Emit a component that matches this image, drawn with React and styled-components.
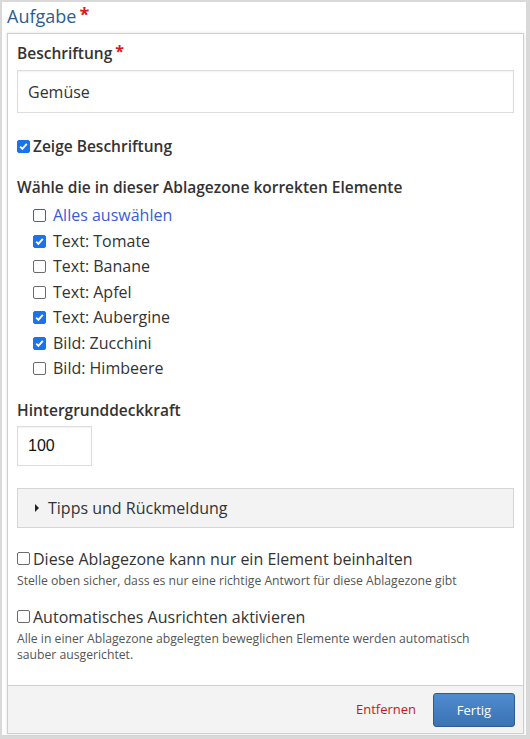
import React from "react";
import styled, { createGlobalStyle } from "styled-components";

const GlobalStyle = createGlobalStyle`
  html, body {
    margin: 0;
    padding: 0;
    background: #fff;
  }
  body {
    font-family: "Open Sans", "Noto Sans", sans-serif;
    color: #333;
  }
`;

const Frame = styled.div`
  width: 530px;
  height: 739px;
  box-sizing: border-box;
  border: 2px solid #d9d9d9;
  border-right-width: 4px;
  border-bottom-width: 4px;
  background: #fff;
  padding: 0 2px 0 5px;
`;

const Legend = styled.div`
  font-size: 18px;
  line-height: 24px;
  color: #2d5d91;
  padding-top: 2px;
  height: 29px;
`;

const Star = styled.span`
  color: #d71920;
  font-weight: 700;
  margin-left: 3px;
  font-size: ${(p) => (p.$small ? "16px" : "18px")};
  line-height: 1;
  vertical-align: top;
  position: relative;
  top: ${(p) => (p.$small ? "2px" : "1px")};
`;

const Card = styled.div`
  border: 1px solid #cfcfcf;
  box-shadow: 0 0 3px rgba(0, 0, 0, 0.12);
  display: flex;
  flex-direction: column;
`;

const Body = styled.div`
  padding: 7px 9px 22px 9px;
  display: flex;
  flex-direction: column;
`;

const FieldLabel = styled.div`
  font-size: 15.5px;
  font-weight: 600;
  line-height: 24px;
  color: #333;
  margin-bottom: ${(p) => p.$mb || 0}px;
  margin-top: ${(p) => p.$mt || 0}px;
`;

const TextInput = styled.div`
  box-sizing: border-box;
  height: ${(p) => p.$h || 43}px;
  border: 1px solid #ddd;
  box-shadow: inset 0 1px 2px rgba(0, 0, 0, 0.06);
  padding: 0 10px;
  display: flex;
  align-items: center;
  font-size: 16px;
  color: #333;
  width: ${(p) => p.$w || "100%"};
  font-family: ${(p) => (p.$arial ? '"Liberation Sans", Arial, sans-serif' : "inherit")};
  ${(p) => p.$arial && "color: #111;"}
`;

const Box = styled.span`
  box-sizing: border-box;
  width: 13px;
  height: 13px;
  flex: none;
  border-radius: 2px;
  border: 1px solid ${(p) => (p.$on ? "#1a73e8" : p.$blue ? "#3b5bd6" : "#6b6b6b")};
  background: ${(p) => (p.$on ? "#1a73e8" : "#fff")};
  display: inline-flex;
  align-items: center;
  justify-content: center;
`;

const Check = ({ on, blue }) => (
  <Box $on={on} $blue={blue}>
    {on && (
      <svg width="11" height="11" viewBox="0 0 11 11">
        <path d="M2.2 5.6 L4.4 7.8 L8.8 2.9" fill="none" stroke="#fff" strokeWidth="1.9" />
      </svg>
    )}
  </Box>
);

const CheckRow = styled.label`
  display: flex;
  align-items: center;
  gap: ${(p) => p.$gap || 3}px;
  font-size: ${(p) => p.$size || 16}px;
  font-weight: ${(p) => p.$weight || 400};
  line-height: ${(p) => p.$lh || 24}px;
  color: ${(p) => p.$color || "#333"};
  margin-top: ${(p) => p.$mt || 0}px;
`;

const ItemList = styled.div`
  display: flex;
  flex-direction: column;
  padding-left: 16px;
  margin-top: 4px;
`;

const Hint = styled.div`
  font-size: 12.2px;
  line-height: 16px;
  color: #555;
  margin-top: 2px;
  padding-right: 6px;
`;

const Collapse = styled.div`
  margin-top: 22px;
  box-sizing: border-box;
  height: 40px;
  border: 1px solid #d5d5d5;
  background: #f3f3f3;
  display: flex;
  align-items: center;
  padding-left: 17px;
  gap: 9px;
  font-size: 16px;
  color: #333;
`;

const Caret = styled.span`
  width: 0;
  height: 0;
  border-top: 4px solid transparent;
  border-bottom: 4px solid transparent;
  border-left: 4px solid #222;
`;

const Footer = styled.div`
  border-top: 1px solid #d0d0d0;
  background: #f3f3f3;
  height: 47px;
  display: flex;
  align-items: center;
  justify-content: flex-end;
  gap: 17px;
  padding-right: 8px;
`;

const DangerLink = styled.span`
  color: #c21a1a;
  font-size: 13px;
`;

const PrimaryButton = styled.button`
  width: 82px;
  height: 34px;
  border: 1px solid #2c5c94;
  border-radius: 3px;
  background: linear-gradient(#4f8ccf, #3b72b3);
  color: #fff;
  font-family: inherit;
  font-size: 13px;
  margin-top: 1px;
`;

const items = [
  { label: "Text: Tomate", on: true },
  { label: "Text: Banane", on: false },
  { label: "Text: Apfel", on: false },
  { label: "Text: Aubergine", on: true },
  { label: "Bild: Zucchini", on: true },
  { label: "Bild: Himbeere", on: false },
];

export default function App() {
  return (
    <>
      <GlobalStyle />
      <Frame>
        <Legend>
          Aufgabe<Star>*</Star>
        </Legend>
        <Card>
          <Body>
            <FieldLabel $mb={5}>
              Beschriftung<Star $small>*</Star>
            </FieldLabel>
            <TextInput>Gemüse</TextInput>

            <CheckRow $weight={600} $size={15.5} $mt={21}>
              <Check on />
              Zeige Beschriftung
            </CheckRow>

            <FieldLabel $mt={17}>Wähle die in dieser Ablagezone korrekten Elemente</FieldLabel>
            <ItemList>
              <CheckRow $gap={7} $size={16} $lh={25.5} $color="#3b5bd6">
                <Check blue />
                Alles auswählen
              </CheckRow>
              {items.map((it) => (
                <CheckRow key={it.label} $gap={7} $size={16} $lh={25.5}>
                  <Check on={it.on} />
                  {it.label}
                </CheckRow>
              ))}
            </ItemList>

            <FieldLabel $mt={16} $mb={4}>Hintergrunddeckkraft</FieldLabel>
            <TextInput $w="75px" $h={40} $arial>100</TextInput>

            <Collapse>
              <Caret />
              Tipps und Rückmeldung
            </Collapse>

            <CheckRow $weight={500} $mt={19}>
              <Check />
              Diese Ablagezone kann nur ein Element beinhalten
            </CheckRow>
            <Hint>Stelle oben sicher, dass es nur eine richtige Antwort für diese Ablagezone gibt</Hint>

            <CheckRow $weight={500} $mt={16}>
              <Check />
              Automatisches Ausrichten aktivieren
            </CheckRow>
            <Hint>
              Alle in einer Ablagezone abgelegten beweglichen Elemente werden automatisch sauber
              ausgerichtet.
            </Hint>
          </Body>
          <Footer>
            <DangerLink>Entfernen</DangerLink>
            <PrimaryButton>Fertig</PrimaryButton>
          </Footer>
        </Card>
      </Frame>
    </>
  );
}
